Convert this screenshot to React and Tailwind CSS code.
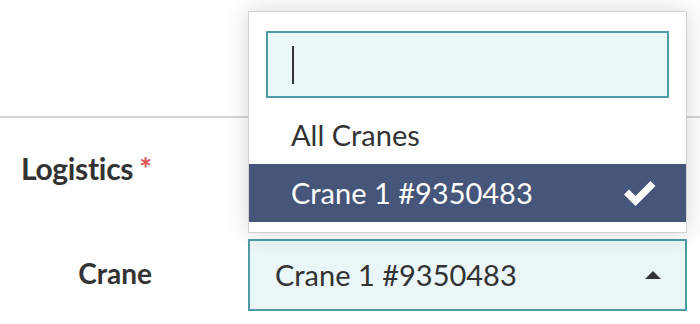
import React, { useState } from 'react';

const CheckIcon = ({ className }) => (
    <svg viewBox="0 0 32 26" className={className} fill="currentColor">
        <path d="M0 14.5 L5 9.5 L11.5 16 L26.5 1 L31.5 6 L11.5 26 Z" />
    </svg>
);

const App = () => {
    const [query, setQuery] = useState('');
    const options = [
        { id: 'all', label: 'All Cranes' },
        { id: '9350483', label: 'Crane 1 #9350483' }
    ];
    const selected = '9350483';

    return (
        <div className="w-[700px] h-[324px] bg-white overflow-hidden text-[#333333]" style={{ fontFamily: 'Lato, "Open Sans", sans-serif' }}>
            <div className="h-[118px] border-b-2 border-[#d4d4d4]" />

            <div className="grid grid-cols-[152px_1fr] gap-x-[96px] pr-[13px]">
                <div className="h-[115px] flex items-center justify-end pb-[14px]">
                    <span className="text-[30px] font-bold tracking-[-0.3px]">Logistics</span>
                    <span className="text-[30px] font-bold text-[#d9534f] ml-[6px]">*</span>
                </div>
                <div className="relative h-[115px]">
                    <div className="absolute left-0 right-0 bottom-0 bg-white border border-[#d2d2d6] shadow-[0_0_22px_rgba(0,0,0,0.16)] pt-[19px] pb-[10px] z-10">
                        <div className="px-[17px]">
                            <div className="relative h-[67px] border-2 border-[#4f9ba6] bg-[#ebf7f9] flex items-center px-[24px]">
                                <input
                                    value={query}
                                    onChange={(e) => setQuery(e.target.value)}
                                    className="w-full bg-transparent outline-none text-[29px]"
                                />
                                <span className="absolute left-[24px] top-[13px] w-[2px] h-[38px] bg-[#333333]" />
                            </div>
                        </div>
                        <ul className="mt-[8px]">
                            {options.map((opt) => (
                                <li
                                    key={opt.id}
                                    className={`h-[58px] flex items-center justify-between pl-[42px] pr-[30px] text-[29px] ${opt.id === selected ? 'bg-[#46557a] text-white' : 'text-[#333333]'}`}
                                >
                                    <span>{opt.label}</span>
                                    {opt.id === selected && <CheckIcon className="w-[32px] h-[26px]" />}
                                </li>
                            ))}
                        </ul>
                    </div>
                </div>

                <div className="h-[72px] mt-[6px] flex items-center justify-end pb-[4px]">
                    <span className="text-[28px] font-bold">Crane</span>
                </div>
                <div className="mt-[6px] h-[72px] border-2 border-[#4f9ba6] bg-[#eaf6f8] flex items-center justify-between pl-[25px] pr-[24px]">
                    <span className="text-[29px]">Crane 1 #9350483</span>
                    <span className="w-0 h-0 border-l-[8px] border-r-[8px] border-b-[8px] border-l-transparent border-r-transparent border-b-[#333333]" />
                </div>
            </div>
        </div>
    );
};

export default App;
